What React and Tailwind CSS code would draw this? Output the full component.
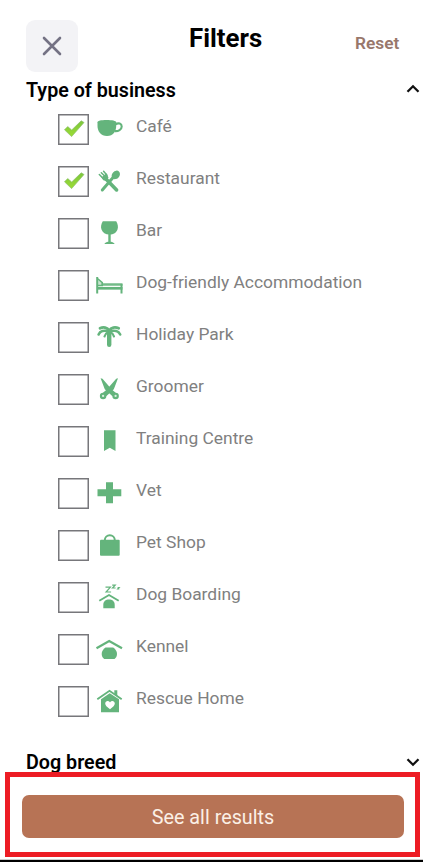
const GREEN = "#64b47c";

const icons = {
  cafe: (
    <>
      <path d="M2.500 8.200C2.500 6.800 6 6 11.500 6s9.700.8 9.700 2.200v3.600c0 5.500-3 10.200-9.200 10.200S2.500 17.500 2.500 11.800z" fill={GREEN} />
      <path d="M20.500 10.300c3-1.800 6.200-.8 6.200 2.200 0 3.200-3.400 5-7 4.600" fill="none" stroke={GREEN} strokeWidth="2.100" />
    </>
  ),
  restaurant: (
    <>
      <path d="M10.500 12.500 21.600 23.900" stroke={GREEN} strokeWidth="3.600" strokeLinecap="round" />
      <path d="M18.500 11 7.300 24" stroke={GREEN} strokeWidth="3" strokeLinecap="round" />
      <ellipse cx="20.800" cy="8.900" rx="3.700" ry="4.700" transform="rotate(42 20.800 8.900)" fill={GREEN} />
      <path d="M4.300 8.500 8.400 12.600M6.300 6.700 10.400 10.800M8.600 5.200 12 9.200" stroke={GREEN} strokeWidth="1.500" strokeLinecap="round" />
      <path d="M6.500 11.500 11.300 7.300 13.500 11.500 11.500 15 8.300 14.300z" fill={GREEN} />
    </>
  ),
  bar: (
    <>
      <path d="M7.800 3.300h13.400c1.600 2.800 2.300 5.500 1.300 8.200-1 3-3.900 5-8 5s-7-2-8-5c-1-2.700-.3-5.400 1.300-8.200z" fill={GREEN} />
      <path d="M14.500 15v9.500" stroke={GREEN} strokeWidth="2.400" />
      <path d="M9.300 25.900c.8-1.600 3-2.200 5.200-2.200s4.400.6 5.200 2.200z" fill={GREEN} />
    </>
  ),
  bed: (
    <>
      <path d="M2.200 7v16.500M26.500 14v9.500" stroke={GREEN} strokeWidth="2" />
      <path d="M2 18.300h25.500" stroke={GREEN} strokeWidth="2.700" />
      <path d="M6.500 14.500h21" stroke={GREEN} strokeWidth="2.500" opacity=".9" />
      <path d="M2.800 8.800 7.300 12.600v2.800H2.800" fill={GREEN} fillOpacity=".35" stroke={GREEN} strokeWidth="1.500" />
    </>
  ),
  palm: (
    <>
      <path d="M14.200 9v13.800" stroke={GREEN} strokeWidth="4.400" strokeLinecap="round" />
      <path d="M14.200 8.700C12.200 5.300 8.500 4.600 5 6.200M14.200 8.700c2-3.400 5.900-4.100 9.500-2.500" fill="none" stroke={GREEN} strokeWidth="2.800" strokeLinecap="round" />
      <path d="M14 9.500C9 7.700 5 9.200 3.600 12.500M14.500 9.500c5-1.800 9.200-.3 10.700 3" fill="none" stroke={GREEN} strokeWidth="2.600" strokeLinecap="round" />
      <path d="M13 10.200c-1.900.9-3.100 2.200-3.500 4.300M15.500 10.200c1.900.9 3.100 2.200 3.500 4.300" fill="none" stroke={GREEN} strokeWidth="2.200" strokeLinecap="round" />
    </>
  ),
  scissors: (
    <>
      <path d="M5.600 4.300 7.500 4.800 16.800 15.500 21 19 17.500 22.300 9.800 15.300z" fill={GREEN} />
      <path d="M23 4.300 21.200 4.800 11.800 15.500 7.700 19 11.200 22.300 18.800 15.300z" fill={GREEN} />
      <circle cx="8.100" cy="21.900" r="2.200" fill="#d9f0df" stroke={GREEN} strokeWidth="2.100" />
      <circle cx="20.600" cy="21.900" r="2.200" fill="#d9f0df" stroke={GREEN} strokeWidth="2.100" />
    </>
  ),
  bookmark: <path d="M9 4.300h11.500V25l-5.700-3.300L9 25z" fill={GREEN} />,
  plus: <path d="M11 4.300h7v7h8.300v7H18v7h-7v-7H2.500v-7H11z" fill={GREEN} />,
  bag: (
    <>
      <rect x="5" y="9.800" width="19.700" height="16" rx="1" fill={GREEN} />
      <path d="M9.800 12v-1.700a5 5 0 0 1 10 0V12" fill="none" stroke={GREEN} strokeWidth="2" />
    </>
  ),
  boarding: (
    <>
      <path d="M4.300 18.800 14 13l9.700 5.800" fill="none" stroke={GREEN} strokeWidth="1.900" />
      <path d="M8.300 26.300v-3.500c0-3.400 2.300-5.300 5.700-5.300s5.700 1.900 5.700 5.300v3.500z" fill={GREEN} />
      <path d="M10.500 5.200h4.900L11.100 10h5M17.200 3.200h3L17.500 6h3.100M22.600 5.500h1.500l-1.300 1.300h1.500" fill="none" stroke={GREEN} strokeWidth="1.200" />
    </>
  ),
  kennel: (
    <>
      <path d="M1.500 14.200 14.200 7 27 14.200" fill="none" stroke={GREEN} strokeWidth="2.200" />
      <path d="M10.500 13.600h7.700c2.400 1.700 3.800 3.900 3.800 6.400 0 2-1 4-2.500 5H9.200c-1.500-1-2.500-3-2.500-5 0-2.500 1.400-4.700 3.800-6.400z" fill={GREEN} />
    </>
  ),
  rescue: (
    <>
      <path d="M2.300 13.300 14.500 4.800l12.200 8.500" fill="none" stroke={GREEN} strokeWidth="1.900" />
      <path d="M19.300 4.300h3v6l-3-2z" fill={GREEN} />
      <path d="M6 13.300 14.700 7.300 24 13.300v13H6z" fill={GREEN} />
      <path d="M15 23.200c-3.200-2.200-4.800-3.700-4.800-5.600 0-3 3.600-3.500 4.800-1.100 1.200-2.400 4.800-1.900 4.800 1.100 0 1.900-1.600 3.400-4.800 5.600z" fill="#fff" />
    </>
  ),
};

const rows = [
  ["cafe", "Café", true],
  ["restaurant", "Restaurant", true],
  ["bar", "Bar", false],
  ["bed", "Dog-friendly Accommodation", false],
  ["palm", "Holiday Park", false],
  ["scissors", "Groomer", false],
  ["bookmark", "Training Centre", false],
  ["plus", "Vet", false],
  ["bag", "Pet Shop", false],
  ["boarding", "Dog Boarding", false],
  ["kennel", "Kennel", false],
  ["rescue", "Rescue Home", false],
];

function CheckMark() {
  return (
    <svg viewBox="0 0 31 31" className="h-full w-full">
      <defs>
        <linearGradient id="tick" x1="0" y1="0" x2="0" y2="1">
          <stop offset="0" stopColor="#7cc63c" />
          <stop offset="1" stopColor="#9cdc34" />
        </linearGradient>
      </defs>
      <path d="M6.500 15.800 9.700 12.600l4 3.400 9.500-9.200 2.800 1.700L13.600 22.600z" fill="url(#tick)" stroke="#8bc069" strokeWidth=".7" strokeLinejoin="round" />
    </svg>
  );
}

function Row({ icon, label, checked }) {
  return (
    <li className="flex h-[52px] items-start">
      <span className="h-[31px] w-[31px] shrink-0 bg-white shadow-[inset_0_0_0_1.5px_#77777b]">
        {checked && <CheckMark />}
      </span>
      <svg viewBox="0 0 30 30" className="ml-1.5 h-[30px] w-[30px] shrink-0">
        {icons[icon]}
      </svg>
      <span className="ml-[11px] whitespace-nowrap text-[17.4px] leading-6 text-[#808080]">{label}</span>
    </li>
  );
}

function Chevron({ up }) {
  return (
    <svg viewBox="0 0 14 10" className="h-[10px] w-[14px]" fill="none" stroke="#111" strokeWidth="2.300">
      <path d={up ? "M1.500 7.800 7 2.300l5.500 5.500" : "M1.500 2.200 7 7.700l5.500-5.500"} />
    </svg>
  );
}

export default function App() {
  return (
    <div className="flex h-[862px] w-[423px] flex-col overflow-hidden bg-white font-['Roboto',sans-serif]">
      <header className="flex h-[78px] shrink-0 items-start pl-[26px] pt-5">
        <button className="flex h-[52px] w-[52px] items-center justify-center rounded-[9px] bg-[#f3f3f6]" aria-label="Close">
          <svg viewBox="0 0 20 20" className="h-5 w-5" stroke="#747284" strokeWidth="2.600" strokeLinecap="round">
            <path d="M2 2l16 16M18 2 2 18" />
          </svg>
        </button>
        <h1 className="ml-[111px] mt-[3px] w-[80px] whitespace-nowrap text-[25.8px] font-bold leading-[30px] text-black">Filters</h1>
        <button className="ml-[86px] mt-[13px] text-[17.3px] font-semibold leading-5 text-[#98776b]">Reset</button>
      </header>
      <section className="shrink-0">
        <div className="flex h-9 items-start justify-between pl-[26px] pr-[3px]">
          <h2 className="mt-px text-[19.7px] font-semibold leading-6 text-black">Type of business</h2>
          <span className="mt-[6px] flex"><Chevron up /></span>
        </div>
        <ul className="pl-[58px]">
          {rows.map(([icon, label, checked]) => (
            <Row key={icon} icon={icon} label={label} checked={checked} />
          ))}
        </ul>
      </section>
      <section className="flex h-[34px] shrink-0 items-start justify-between pl-[26px] pr-[3px] pt-[13px]">
        <h2 className="text-[19.7px] font-semibold leading-6 text-black">Dog breed</h2>
        <span className="mt-[6px] flex"><Chevron /></span>
      </section>
      <footer className="ml-[5px] flex h-[85px] w-[415px] shrink-0 items-start border-[5px] border-[#ed1c24] bg-white pl-3 pt-[18px]">
        <button className="h-[43px] w-[382px] rounded-[7px] bg-[#b77355] pt-0.5 text-[19.8px] leading-[41px] text-[#fbf0e6]">See all results</button>
      </footer>
      <div className="mt-[2px] h-px shrink-0 bg-[#ccc]" />
      <div className="h-2 shrink-0 bg-black" />
    </div>
  );
}
